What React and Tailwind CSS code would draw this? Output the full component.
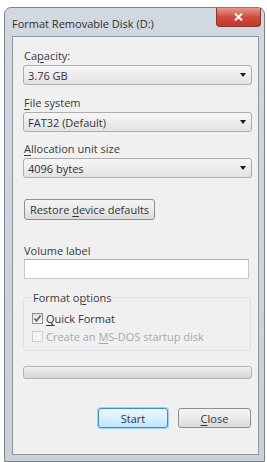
const font = { fontFamily: '"Open Sans", "Noto Sans", Arial, sans-serif' };

function U({ children }) {
  return <span className="underline underline-offset-[2px] decoration-[0.5px]">{children}</span>;
}

function Label({ children, className = '' }) {
  return <div className={`h-[15px] leading-[15px] pl-[1px] text-[#3a3a3a] ${className}`}>{children}</div>;
}

function Combo({ value, className = '' }) {
  return (
    <div className={`h-[20px] flex items-center justify-between rounded-[3px] border border-[#acacac] bg-gradient-to-b from-[#f6f6f6] to-[#e3e3e3] pl-[4px] pr-[5px] text-[#333] ${className}`}>
      <span className="leading-[15px]">{value}</span>
      <span className="w-0 h-0 border-l-[3px] border-r-[3px] border-t-[4px] border-l-transparent border-r-transparent border-t-[#1a1a1a]" />
    </div>
  );
}

function Check({ checked, disabled, children, className = '' }) {
  return (
    <div className={`h-[15px] flex items-center gap-[3px] ${className}`}>
      <span className={`w-[11px] h-[11px] flex items-center justify-center border ${disabled ? 'border-[#cfcfcf] bg-[#f4f4f4]' : 'border-[#8f8f8f] bg-gradient-to-b from-[#dedede] to-[#f7f7f7]'}`}>
        {checked && (
          <svg width="9" height="9" viewBox="0 0 9 9">
            <path d="M1.5 4.5 L3.5 7 L7.5 1.5" fill="none" stroke="#4a5a7a" strokeWidth="1.4" />
          </svg>
        )}
      </span>
      <span className={`leading-[15px] ${disabled ? 'text-[#a8a8a8]' : 'text-[#3a3a3a]'}`}>{children}</span>
    </div>
  );
}

export default function App() {
  return (
    <div className="w-[267px] h-[462px] bg-white pl-[4px] pt-[7px] overflow-hidden text-[11px]" style={font}>
      <div className="w-[261px] h-[455px] flex flex-col rounded-t-[7px] border border-[#7b828b] bg-gradient-to-b from-[#d2d8df] to-[#c9d0d8]">
        <div className="h-[28px] flex items-start shrink-0">
          <div className="pl-[7px] pt-[8px] leading-[15px] text-[#2f2f2f]">Format Removable Disk (D:)</div>
          <div className="ml-auto mr-[3px] w-[45px] h-[19px] rounded-b-[4px] border border-t-0 border-[#7c3a33] bg-gradient-to-b from-[#e5978b] via-[#d24b3d] to-[#c3362a] flex items-center justify-center">
            <svg width="9" height="8" viewBox="0 0 9 8">
              <path d="M1 0.5 L8 7.5 M8 0.5 L1 7.5" stroke="#ffffff" strokeWidth="2" />
            </svg>
          </div>
        </div>
        <div className="ml-[7px] mr-[5px] mb-[6px] flex-1 border border-[#8e97a1] bg-[#f0f0f0] pl-[10px] pr-[6px] pt-[11px] flex flex-col">
          <Label>Ca<U>p</U>acity:</Label>
          <Combo className="mt-[2px]" value="3.76 GB" />
          <Label className="mt-[10px]"><U>F</U>ile system</Label>
          <Combo className="mt-[2px]" value="FAT32 (Default)" />
          <Label className="mt-[9px]"><U>A</U>llocation unit size</Label>
          <Combo className="mt-[2px]" value="4096 bytes" />
          <button className="mt-[21px] ml-[1px] w-[131px] h-[21px] rounded-[3px] border border-[#8f8f8f] bg-gradient-to-b from-[#f4f4f4] via-[#ebebeb] to-[#d9d9d9] text-[#333] leading-[15px]">
            Restore <U>d</U>evice defaults
          </button>
          <Label className="mt-[23px]">Volume label</Label>
          <div className="mt-[1px] ml-[1px] mr-[3px] h-[20px] border border-[#c4c8cc] border-t-[#a8adb3] bg-white" />
          <fieldset className="mt-[11px] mr-[1px] border border-[#dcdfe2] rounded-[3px] px-[8px] pb-[6px]">
            <legend className="ml-[0px] px-[1px] h-[15px] leading-[15px] text-[#3a3a3a]">Format o<U>p</U>tions</legend>
            <Check className="mt-[6px]" checked>
              <U>Q</U>uick Format
            </Check>
            <Check className="mt-[3px]" disabled>
              Create an <U>M</U>S-DOS startup disk
            </Check>
          </fieldset>
          <div className="mt-[15px] h-[13px] rounded-[3px] border border-[#b2b2b2] bg-gradient-to-b from-[#f3f3f3] via-[#e2e2e2] to-[#d6d6d6]" />
          <div className="mt-[29px] flex justify-end gap-[10px] mr-[1px]">
            <button className="w-[70px] h-[20px] rounded-[3px] border border-[#3d8fd0] bg-gradient-to-b from-[#eaf6fd] via-[#d9f0fc] to-[#bee6fd] text-[#333] leading-[15px] shadow-[0_0_0_1px_#9ed3f3]">
              Start
            </button>
            <button className="w-[73px] h-[20px] rounded-[3px] border border-[#8f8f8f] bg-gradient-to-b from-[#f4f4f4] via-[#ebebeb] to-[#d9d9d9] text-[#333] leading-[15px]">
              <U>C</U>lose
            </button>
          </div>
        </div>
      </div>
    </div>
  );
}
